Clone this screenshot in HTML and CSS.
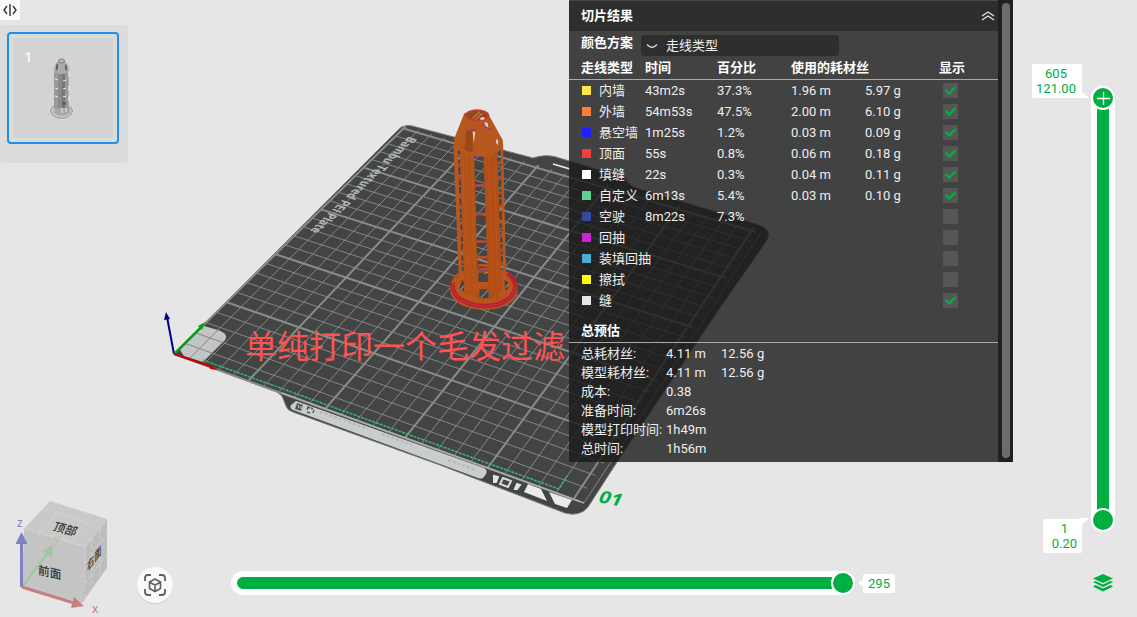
FILE: index.html
```html
<!DOCTYPE html>
<html lang="zh-CN">
<head>
<meta charset="utf-8">
<title>切片预览</title>
<link rel="stylesheet" href="styles.css">
</head>
<body>
<main class="stage">
  <svg class="scene" viewBox="0 0 1137 617" preserveAspectRatio="xMidYMid slice" aria-hidden="true">
    <!-- build plate -->
    <path class="plate" d="M174 354 L398 130 Q404 123 416 127 L533 158 Q545 154 556 157 L602 171 L625 178 Q628 185 636 188 L756 224 Q773 229 767 240 L717 312 L617 462 L588 507 Q580 517 565 513 L440 465 L293 412 Q287 410 286 406 L282 396 L277 392 Z"/>
    <path class="patch" d="M180 350 L204 326 L218 330 Q229 334 225 340 L203 362 L184 356 Z"/>
    <g id="grid"></g>
    <path d="M553 164 L570 169" stroke="#eee" stroke-width="1.5"/>
    <text class="plate-name" transform="matrix(-.7 .67 -1.1 -.4 409 136)">Bambu Textured PEI Plate</text>
    <path class="front-line" d="M203 360 L559 489 L567 476"/>
    <path d="M282 393 L584 503" stroke="#a9adac" stroke-width="1.5"/>
    <path d="M296 401 L484 468 Q488 470 486 474 L484 477 Q482 480 478 478 L293 410 Q289 408 291 405 Z" fill="#c9cdcd"/>
    <path d="M297 403l6 2-2 6-6-2z" fill="#555"/><path d="M298 405l1 3m2-2l0 3" stroke="#c9cdcd"/>
    <path d="M310 408l-2-1-1 3m0 2l3 1m3 0l1-3m-1-1l-2-1" fill="none" stroke="#555" stroke-width="1.4"/>
    <path d="M320 412L368 429M382 434L412 445M448 460L476 470" stroke="#b2b7b7" stroke-width="2" stroke-dasharray="3 2"/>
    <path d="M494 476l4 1-2 5-2 0zM517 484l3 1-3 4-2 0z" fill="#e2e5e5" stroke="#e2e5e5" stroke-width="2"/>
    <path d="M503 478l8 3-3 6-8-3z" fill="none" stroke="#d7dada" stroke-width="2"/>
    <path d="M528 484L541 489 547 501 524 492ZM549 492L572 500 567 508 555 504Z" fill="#e9eaea"/>
    <text class="plate-number" transform="matrix(1.05 .2 -.4 .85 597 502)">01</text>

    <!-- origin axes -->
    <g stroke-width="2">
      <path d="M174 354L167 317" stroke="#00008f"/><path d="M166 312l-2 8 6-1z" fill="#00008f"/>
      <path d="M174 354L202 326" stroke="#009c13"/><path d="M205 322l-3 8-4-4z" fill="#00a516"/>
      <path d="M174 354L212 367" stroke="#c50000"/><path d="M218 370l-8-5 0 4z" fill="#c50000"/>
    </g>

    <!-- sliced model -->
    <g transform="translate(420 90) scale(.33333)">
      <path fill="#b9531b" d="M90 598C90 570 108 550 125 543H258C278 552 293 572 293 598C293 636 250 659 192 659C133 659 90 634 90 598Z"/>
      <path d="M98 578C92 620 138 648 192 648C248 648 286 622 286 585C284 571 276 560 263 550" fill="none" stroke="#b72031" stroke-width="13"/>
      <path d="M98 578C92 620 138 648 192 648C248 648 286 622 286 585" fill="none" stroke="#dc6344" stroke-width="2" stroke-dasharray="3 3"/>
      <path d="M122 550L107 600Q138 635 192 635Q245 635 273 598L256 540L207 560V620L176 620V560Z" fill="#b9571e"/>
      <path d="M175 548h31v28h-31zM178 598h29v27h-29zM125 570l9 7-3 28-13-9zM253 570l10 4 2 22-9 6z" fill="#444645"/>
      <path d="M193 552l12-7M182 624l24-25M122 600l9-13M258 593l6-10" stroke="#a5aaa9" stroke-width="3"/>
      <g fill="none" stroke="#b94c28" stroke-width="8">
        <path d="M162 287h32M164 372h35M169 455h34M172 502h33M174 526h32M175 538h31"/>
        <path d="M110 234l16-20M108 254l18 17M118 322l10-14M113 342l17 14M120 403l12-10M118 432l15 9M126 483l11-9M123 513l14 9M227 226l16-12M230 273l14-12M232 315l12-9M232 359l16-17M235 401l15-8M237 443l15-13M240 484l14-8M241 526l14-12"/>
      </g>
      <path d="M163 205h28M164 291h28M166 376h28M172 459h28M178 543h27M111 219l12 7M113 263l10 9M230 319l12-7M236 445l12-7" stroke="#5939a6" stroke-width="2"/>
      <path d="M100 167L113 175 126 550 116 550ZM242 163L249 158 258 540 249 540Z" fill="#b9571e"/>
      <path d="M119 178h43L175 625 133 612Z" fill="#b35118"/>
      <path d="M190 185H232L246 606 206 622Z" fill="#b34e17"/>
      <path d="M133 70L103 145 101 178 160 197Q205 205 231 187L249 178 248 150 207 76Z" fill="#b5571e"/>
      <path d="M140 120L133 180 158 188V125Z" fill="#9c4516"/>
      <path d="M158 125h8l-5 35zM230 145l5 8-2 12-5-7zM194 96l9 3 2 16-9-7z" fill="#ded4d2"/>
      <path d="M151 120h15M190 105l16 10 8 3" stroke="#62429a" stroke-width="3" fill="none"/>
      <ellipse cx="171" cy="76" rx="34" ry="15" fill="#8f4a25" stroke="#c33a30" stroke-width="6"/>
      <path d="M158 85L180 65M168 88L187 70" stroke="#d27337" stroke-width="4"/>
      <path d="M180 84l12-3 2 7-11 2z" fill="#e8dddd"/>
      <g fill="none" stroke="#c9692b" stroke-width="2" stroke-dasharray="3 4">
        <path d="M120 110L112 170M128 190L140 600M140 190L148 600M155 200L164 605M178 95L180 188M190 100L195 190M202 112L211 188M205 200L219 603M223 200L234 598M136 186L160 198M167 198Q204 205 232 187"/>
      </g>
      <path d="M210 630q14-58 27 0M216 630q8-38 15 0" fill="none" stroke="#9c4817" stroke-width="2"/>
    </g>

    <!-- orientation cube -->
    <g class="cube">
      <path d="M50 501L107 519 85 547 24 529Z" fill="#c9c9c9"/>
      <path d="M24 529L85 547 82 603 22 587Z" fill="#c4c4c4"/>
      <path d="M107 519V568L82 603 85 547Z" fill="#bdbdbd"/>
      <path d="M44 509L100 527M30 529L85 546.5V603M62 506L36 540M91 515L66 550M85 547L107 519M92 538V590M100 528V578M84 565L107 535M84 585L107 554" fill="none" stroke="#d6d6d6" stroke-width=".8" stroke-dasharray="5 2"/>
      <text transform="matrix(.96 .25 -.4 .9 52 530)">顶部</text>
      <text transform="matrix(.97 .23 0 1 38 574)">前面</text>
      <text transform="matrix(.6 -.78 0 1 87 572)">右面</text>
    </g>
    <path d="M22 587L47 554" stroke="#a0c8a0" stroke-width="2.5"/><path d="M53 545l-1 12-10-6z" fill="#a0c8a0"/>
    <path d="M21.500 587V542" stroke="#8080c4" stroke-width="3"/><path d="M21.500 532l6 12h-12z" fill="#8080c4"/>
    <path d="M22 587L74 603" stroke="#c48080" stroke-width="3"/><path d="M84 606l-10-9-3 11z" fill="#c48080"/>
    <g class="axis-names">
      <text x="17" y="527" fill="#8080c4">z</text>
      <text x="54" y="543" fill="#a5cba5">y</text>
      <text x="92" y="613" fill="#c48080">x</text>
    </g>
    <text class="caption" x="245" y="358">单纯打印一个毛发过滤</text>
  </svg>

  <aside class="plates">
    <button class="collapse" type="button" aria-label="折叠">
      <svg width="14" height="12" viewBox="0 0 14 12" fill="none" stroke="#3c3c3c" stroke-width="1.500"><path d="M4 2L1 6l3 4M10 2l3 4-3 4M7 0v12"/></svg>
    </button>
    <div class="plate-list">
      <button class="plate-card" type="button">
        <span class="plate-thumb">
          <span class="plate-index">1</span>
          <svg class="mini" width="26" height="64" viewBox="0 0 26 64" aria-hidden="true">
            <ellipse cx="12.500" cy="54" rx="11.500" ry="8" fill="#c3c3c3" stroke="#f1f1f1"/>
            <ellipse cx="12.500" cy="54" rx="11" ry="7.500" fill="none" stroke="#777" stroke-width=".7"/>
            <path d="M6 48h14l1 8q-8 5-16 0z" fill="#a7a7a7"/>
            <path d="M5 12Q6 6 10 4h5q4 3 5 8v38H5z" fill="#aaa"/>
            <path d="M5 16h4v35H5zM16 16h3v35h-3z" fill="#999"/>
            <path d="M9 17h4v34H9z" fill="#8a8a8a"/><path d="M13 17h3v34h-3z" fill="#777"/>
            <path d="M6 22l3 1M6 31l3 1M6 39l3 1M14 24l3-1M14 32l3-1M14 40l3-1M20 14v6M20 29v5M20 39v5M13 51v5M17 51v4" stroke="#eee"/>
            <path d="M7 8l2-2v6l-2 2zM16 7l2 2v5l-2-2zM13 45h4v3h-4z" fill="#636363"/>
            <ellipse cx="12.500" cy="4" rx="3" ry="2" fill="#bbb" stroke="#777"/>
          </svg>
        </span>
      </button>
    </div>
  </aside>

  <section class="result" aria-label="切片结果">
    <div class="result-body">
      <header class="result-head">
        <h2>切片结果</h2>
        <button type="button" class="fold" aria-label="收起"><svg width="14" height="12" viewBox="0 0 14 12" fill="none" stroke="#e4e4e4" stroke-width="1.300"><path d="M1 6l6-4 6 4M1 10l6-4 6 4"/></svg></button>
      </header>
      <div class="scheme">
        <label for="scheme">颜色方案</label>
        <span class="select-box">
          <select id="scheme"><option>走线类型</option></select>
          <svg width="12" height="6" viewBox="0 0 12 6" fill="none" stroke="#ddd" stroke-width="1.300" aria-hidden="true"><path d="M1 1.500Q4 4.500 6 4.500T11 1.500"/></svg>
        </span>
      </div>
      <table class="lines">
        <colgroup><col class="c-type"><col class="c-time"><col class="c-len"><col class="c-len"><col class="c-len"><col></colgroup>
        <thead><tr><th scope="col">走线类型</th><th scope="col">时间</th><th scope="col">百分比</th><th scope="col" colspan="2">使用的耗材丝</th><th scope="col">显示</th></tr></thead>
        <tbody>
          <tr><td><label for="l1"><i class="sw inner"></i>内墙</label></td><td>43m2s</td><td>37.3%</td><td>1.96 m</td><td>5.97 g</td><td><input id="l1" type="checkbox" checked></td></tr>
          <tr><td><label for="l2"><i class="sw outer"></i>外墙</label></td><td>54m53s</td><td>47.5%</td><td>2.00 m</td><td>6.10 g</td><td><input id="l2" type="checkbox" checked></td></tr>
          <tr><td><label for="l3"><i class="sw overhang"></i>悬空墙</label></td><td>1m25s</td><td>1.2%</td><td>0.03 m</td><td>0.09 g</td><td><input id="l3" type="checkbox" checked></td></tr>
          <tr><td><label for="l4"><i class="sw top"></i>顶面</label></td><td>55s</td><td>0.8%</td><td>0.06 m</td><td>0.18 g</td><td><input id="l4" type="checkbox" checked></td></tr>
          <tr><td><label for="l5"><i class="sw gap"></i>填缝</label></td><td>22s</td><td>0.3%</td><td>0.04 m</td><td>0.11 g</td><td><input id="l5" type="checkbox" checked></td></tr>
          <tr><td><label for="l6"><i class="sw custom"></i>自定义</label></td><td>6m13s</td><td>5.4%</td><td>0.03 m</td><td>0.10 g</td><td><input id="l6" type="checkbox" checked></td></tr>
          <tr><td><label for="l7"><i class="sw travel"></i>空驶</label></td><td>8m22s</td><td>7.3%</td><td></td><td></td><td><input id="l7" type="checkbox"></td></tr>
          <tr><td><label for="l8"><i class="sw retract"></i>回抽</label></td><td></td><td></td><td></td><td></td><td><input id="l8" type="checkbox"></td></tr>
          <tr><td><label for="l9"><i class="sw unretract"></i>装填回抽</label></td><td></td><td></td><td></td><td></td><td><input id="l9" type="checkbox"></td></tr>
          <tr><td><label for="l10"><i class="sw wipe"></i>擦拭</label></td><td></td><td></td><td></td><td></td><td><input id="l10" type="checkbox"></td></tr>
          <tr><td><label for="l11"><i class="sw seam"></i>缝</label></td><td></td><td></td><td></td><td></td><td><input id="l11" type="checkbox" checked></td></tr>
        </tbody>
      </table>
      <h3 class="total-title">总预估</h3>
      <table class="totals">
        <colgroup><col class="t-name"><col class="t-len"><col></colgroup>
        <tbody>
          <tr><th scope="row">总耗材丝:</th><td>4.11 m</td><td>12.56 g</td></tr>
          <tr><th scope="row">模型耗材丝:</th><td>4.11 m</td><td>12.56 g</td></tr>
          <tr><th scope="row">成本:</th><td>0.38</td><td></td></tr>
          <tr><th scope="row">准备时间:</th><td>6m26s</td><td></td></tr>
          <tr><th scope="row">模型打印时间:</th><td>1h49m</td><td></td></tr>
          <tr><th scope="row">总时间:</th><td>1h56m</td><td></td></tr>
        </tbody>
      </table>
    </div>
    <div class="scroll"><div class="scroll-thumb"></div></div>
  </section>

  <div class="layer-slider">
    <input type="range" class="range" min="1" max="605" value="605" aria-label="最高层">
    <input type="range" class="range" min="1" max="605" value="1" aria-label="最低层">
    <svg class="plus" width="24" height="24" viewBox="0 0 24 24" fill="none" stroke="#fff" stroke-width="1.300" aria-hidden="true"><path d="M6 12.500h13M12.500 6v13"/></svg>
  </div>
  <output class="tag tag-high">605<br>121.00</output>
  <output class="tag tag-low">1<br>0.20</output>
  <button type="button" class="layers" aria-label="层">
    <svg width="20" height="20" viewBox="0 0 20 20" fill="#00ae42"><path d="M10 1L20 5.500 10 10 0 5.500ZM0 9l2.500-1L10 11.500 17.500 8 20 9 10 14ZM0 13.500l2.500-1.500L10 15.500l7.500-3.500 2.500 1.500L10 18.500Z"/></svg>
  </button>

  <button type="button" class="fit" aria-label="适应视图">
    <svg width="24" height="24" viewBox="0 0 24 24" fill="none" stroke="#606060" stroke-width="1.800"><path d="M2 8V5q0-3 3-3h3M16 2h3q3 0 3 3v3M22 16v3q0 3-3 3h-3M8 22H5q-3 0-3-3v-3"/><path d="M12 6l5.500 3v6.500L12 18.500 6.500 15.500V9ZM6.500 9.200L12 12l5.500-2.800M12 12v6" stroke-width="1.600"/></svg>
  </button>
  <div class="move-slider">
    <span class="move-track"><input type="range" class="range" min="0" max="295" value="295" aria-label="移动步数"></span>
    <output class="tag tag-move">295</output>
  </div>
</main>
<script src="scene.js"></script>
</body>
</html>
```
FILE: styles.css
```css
* { box-sizing: border-box; }
body {
  margin: 0;
  background: #e6e6e6;
  color: #eee;
  font: 13px/19px Roboto, "Noto Sans CJK SC", sans-serif;
}
button { padding: 0; border: 0; background: none; cursor: pointer; }
svg { display: block; }
.stage { position: relative; height: 100vh; min-height: 560px; overflow: hidden; }
.scene { width: 100%; height: 100%; }

.plate { fill: #434544; stroke: #777978; stroke-width: 1; }
.patch { fill: #c3c5c4; }
.grid-fine { stroke: #858786; stroke-width: 1; }
.grid-bold { stroke: #8a8c8b; stroke-width: 2; }
.plate-name { font: bold 11px "Open Sans", sans-serif; fill: #b4b6b5; }
.plate-number { font: bold 19px "Open Sans", sans-serif; fill: #00ae42; }
.front-line { fill: none; stroke: #3cb574; stroke-width: 1.5; stroke-dasharray: 3 1; }
.cube text { font-size: 12px; font-weight: 500; fill: #333; }
.axis-names { font: 12px "Noto Sans", sans-serif; }
.caption { font-size: 32px; fill: #ff5252; }

.plates { position: absolute; top: 0; left: 0; width: 128px; }
.collapse { display: grid; place-items: center; width: 20px; height: 20px; background: #fafafa; }
.plate-list { margin-top: 5px; height: 138px; padding: 7px; background: #dcdcdc; border-radius: 4px; }
.plate-card { display: block; width: 112px; padding: 4px; border: 2px solid #1f8eef; border-radius: 4px; }
.plate-thumb { display: flex; height: 100px; padding: 10px 11px; background: #d3d3d3; }
.plate-index { width: 25px; font: 500 15px/17px "Noto Sans", sans-serif; color: #fafafa; text-align: left; }
.mini { margin-top: 9px; }

.result {
  position: absolute; top: 0; right: 124px; width: 444px;
  display: flex;
}
.result-body { flex: 1; padding-bottom: 4px; background: rgba(25, 25, 25, .8); }
.result-head {
  display: flex; align-items: center; justify-content: space-between;
  height: 31px; padding: 0 3px 0 12px;
  background: #2e2e2e; border-top: 1px solid #484848;
}
h2, h3 { margin: 0; font-size: 13px; font-weight: bold; color: #fff; }
h2 { line-height: 21px; padding-bottom: 1px; }
.scheme { display: flex; align-items: center; gap: 8px; height: 26px; padding-left: 12px; font-weight: bold; color: #fff; }
.scheme label { width: 52px; line-height: 23px; align-self: flex-start; }
.select-box { display: grid; align-items: center; width: 198px; height: 21px; margin-top: 3px; }
.select-box > * { grid-area: 1 / 1; }
.select-box svg { margin-left: 5px; pointer-events: none; }
.select-box select {
  appearance: none; width: 100%; height: 21px; padding: 0 0 0 25px;
  border: 0; border-radius: 4px; background: #2e2e2e; color: #eee; font: inherit; font-weight: normal;
}
table { width: 100%; border-spacing: 0; table-layout: fixed; }
th, td { padding: 0; text-align: left; white-space: nowrap; }
.lines th { height: 23px; padding-bottom: 2px; border-bottom: 1px solid #aaa; color: #fff; }
.lines th:first-child, .lines td:first-child { padding-left: 12px; }
.lines td { height: 21px; }
.lines td:last-child { padding-left: 4px; }
.c-type { width: 76px; }
.c-time { width: 72px; }
.c-len { width: 74px; }
.lines label { display: flex; align-items: center; }
.sw { width: 9px; height: 9px; margin: 0 8px 0 1px; flex: none; }
.inner { background: #ffe64d; }
.outer { background: #ff7d38; }
.overhang { background: #1f1fff; }
.top { background: #f03f3f; }
.gap { background: #fff; }
.custom { background: #5ed194; }
.travel { background: #38489b; }
.retract { background: #cd22d6; }
.unretract { background: #49adcf; }
.wipe { background: #ff0; }
.seam { background: #e6e6e6; }
.lines input {
  appearance: none; display: block; width: 15px; height: 15px; margin: 0; background: #565656;
}
.lines input:checked::before {
  content: ""; display: block; width: 15px; height: 15px; background: #00ae42;
  clip-path: polygon(11% 50%, 22% 40%, 41% 58%, 78% 21%, 89% 33%, 41% 82%);
}
.total-title { margin-top: 9px; height: 23px; padding-left: 12px; border-bottom: 1px solid #aaa; line-height: 21px; }
.totals { margin-top: 1px; }
.totals th { height: 19px; padding-left: 12px; font-weight: normal; }
.t-name { width: 97px; }
.t-len { width: 55px; }
.scroll { width: 15px; padding: 3px 3px 4px 4px; background: #202020; display: flex; }
.scroll-thumb { flex: 1; border-radius: 4px; background: #6c6c6c; }

.range { appearance: none; margin: 0; background: none; pointer-events: none; }
.range::-webkit-slider-thumb {
  appearance: none; width: 24px; height: 24px; border: 2px solid #fff; border-radius: 50%;
  background: #00ae42; pointer-events: auto;
}
.layer-slider {
  position: absolute; top: 86px; right: 22px; bottom: 85px; width: 24px;
  display: grid; border: 6px solid #fff; border-radius: 12px; background: #00ae42;
}
.layer-slider > .range {
  position: absolute; inset: -6px; width: 24px; height: calc(100% + 12px);
  writing-mode: vertical-lr; direction: rtl;
}
.plus { position: absolute; top: -6px; left: -6px; pointer-events: none; }
.tag {
  display: block; background: #fff; border-radius: 2px; color: #00ae42; text-align: center; line-height: 15px;
}
.tag::after { content: ""; position: absolute; background: #fff; }
.tag-high { position: absolute; top: 64px; right: 55px; width: 50px; padding: 2px 2px 2px 0; }
.tag-high::after { right: -7px; bottom: 0; width: 8px; height: 7px; clip-path: polygon(0 0, 100% 100%, 0 100%); }
.tag-low { position: absolute; bottom: 64px; right: 55px; width: 39px; padding: 2px 0 2px 4px; }
.tag-low::after { right: -7px; top: -1px; width: 10px; height: 7px; clip-path: polygon(0 0, 100% 0, 30% 100%); }
.layers { position: absolute; right: 24px; bottom: 24px; }

.fit {
  position: absolute; left: 137px; bottom: 14px; width: 36px; height: 36px;
  display: grid; place-items: center; border-radius: 50%; background: #fafafa;
  box-shadow: 0 1px 1px rgba(0, 0, 0, .12);
}
.move-slider {
  position: absolute; left: 231px; right: 242px; bottom: 22px;
  display: flex; align-items: center; gap: 8px;
}
.move-track { flex: 1; position: relative; height: 24px; border: 6px solid #fff; border-radius: 12px; background: #00ae42; }
.move-track .range { position: absolute; inset: -6px; width: calc(100% + 12px); height: 24px; }
.tag-move { position: relative; width: 32px; padding: 2px 0; }
.tag-move::after { left: -5px; top: 5px; width: 6px; height: 9px; clip-path: polygon(100% 0, 100% 100%, 0 50%); }
```
FILE: scene.js
```js
// Projects the 256 mm bed onto the view and draws its 10 mm grid.
const size = 25.6;
const [p0, p1, p2, p3] = [[174, 354], [584, 503], [764, 228], [408, 124]];
const dx1 = p1[0] - p2[0], dy1 = p1[1] - p2[1];
const dx2 = p3[0] - p2[0], dy2 = p3[1] - p2[1];
const sx = p0[0] - p1[0] + p2[0] - p3[0];
const sy = p0[1] - p1[1] + p2[1] - p3[1];
const den = dx1 * dy2 - dx2 * dy1;
const g = (sx * dy2 - dx2 * sy) / den;
const h = (dx1 * sy - sx * dy1) / den;

function project(x, y) {
  const u = x / size, v = y / size, w = g * u + h * v + 1;
  return [0, 1].map(k =>
    ((p1[k] - p0[k] + g * p1[k]) * u + (p3[k] - p0[k] + h * p3[k]) * v + p0[k]) / w);
}

const grid = document.getElementById("grid");
function line(a, b, bold) {
  const el = document.createElementNS("http://www.w3.org/2000/svg", "line");
  const [x1, y1] = project(...a), [x2, y2] = project(...b);
  Object.entries({ x1, y1, x2, y2 }).forEach(([k, v]) => el.setAttribute(k, v.toFixed(1)));
  el.setAttribute("class", bold ? "grid-bold" : "grid-fine");
  grid.append(el);
}
for (let i = 0; i <= 25; i++) {
  line([i, 0], [i, 25.3], i % 5 === 0);
  line([0, i], [25.3, i], i % 5 === 0);
}
line([25.6, 0], [25.6, 25], false);
```
